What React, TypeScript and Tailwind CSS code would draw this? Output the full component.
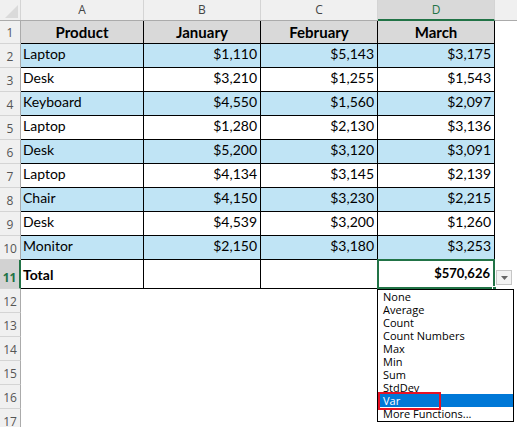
import React from "react";

const data: string[][] = [
  ["Laptop", "$1,110", "$5,143", "$3,175"],
  ["Desk", "$3,210", "$1,255", "$1,543"],
  ["Keyboard", "$4,550", "$1,560", "$2,097"],
  ["Laptop", "$1,280", "$2,130", "$3,136"],
  ["Desk", "$5,200", "$3,120", "$3,091"],
  ["Laptop", "$4,134", "$3,145", "$2,139"],
  ["Chair", "$4,150", "$3,230", "$2,215"],
  ["Desk", "$4,539", "$3,200", "$1,260"],
  ["Monitor", "$2,150", "$3,180", "$3,253"],
];

const menu = ["None", "Average", "Count", "Count Numbers", "Max", "Min", "Sum", "StdDev", "Var", "More Functions..."];

const cellFont = { fontFamily: "Lato, 'Liberation Sans', sans-serif" };
const uiFont = { fontFamily: "'Open Sans', 'Noto Sans', sans-serif" };

function RowHead({ n, h, selected }: { n: number; h: string; selected?: boolean }) {
  return (
    <div
      className={`w-[21px] shrink-0 flex items-end justify-center pb-[1px] text-[12px] leading-none border-b border-[#d4d4d4] ${
        selected ? "bg-[#d2d2d2] text-[#217346] border-r-2 border-r-[#217346]" : "bg-[#f0f0f0] text-[#555] border-r border-r-[#ababab]"
      } ${h}`}
      style={uiFont}
    >
      <span className="pb-[3px]">{n}</span>
    </div>
  );
}

export default function App() {
  return (
    <div className="relative w-[517px] h-[427px] overflow-hidden bg-white">
      {/* Column header row */}
      <div className="flex h-[21px] border-b border-[#ababab] bg-[#f0f0f0] text-[12px] text-[#444]" style={uiFont}>
        <div className="relative w-[21px] shrink-0 border-r border-[#d4d4d4]">
          <svg className="absolute right-[2px] bottom-[2px]" width="13" height="13" viewBox="0 0 13 13">
            <polygon points="13,0 13,13 0,13" fill="#dadada" />
          </svg>
        </div>
        <div className="w-[123px] shrink-0 flex items-center justify-center border-r border-[#d4d4d4]">A</div>
        <div className="w-[117px] shrink-0 flex items-center justify-center border-r border-[#d4d4d4]">B</div>
        <div className="w-[117px] shrink-0 flex items-center justify-center border-r border-[#d4d4d4]">C</div>
        <div className="w-[117px] shrink-0 flex items-center justify-center border-r border-[#d4d4d4] bg-[#d9d9d9] text-[#217346] border-b-2 border-b-[#217346] -mb-[1px]">D</div>
        <div className="flex-1" />
      </div>

      {/* Row 1 header */}
      <div className="flex h-[23px]" style={cellFont}>
        <RowHead n={1} h="h-[23px]" />
        <div className="w-[123px] shrink-0 flex items-center justify-center bg-[#d9d9d9] border-r border-b border-black font-bold text-[15px] text-black">Product</div>
        <div className="w-[117px] shrink-0 flex items-center justify-center bg-[#d9d9d9] border-r border-b border-black font-bold text-[15px] text-black">January</div>
        <div className="w-[117px] shrink-0 flex items-center justify-center bg-[#d9d9d9] border-r border-b border-black font-bold text-[15px] text-black">February</div>
        <div className="w-[117px] shrink-0 flex items-center justify-center bg-[#d9d9d9] border-r border-b border-black font-bold text-[15px] text-black">March</div>
      </div>

      {data.map((r, i) => {
        const blue = i % 2 === 0;
        const bg = blue ? "bg-[#c0e4f5]" : "bg-white";
        return (
          <div key={i} className="flex h-[24px] text-[14px] text-black" style={cellFont}>
            <RowHead n={i + 2} h="h-[24px]" />
            <div className={`w-[123px] shrink-0 flex items-end pb-[3px] pl-[2px] border-r border-b border-black ${bg}`}>{r[0]}</div>
            <div className={`w-[117px] shrink-0 flex items-end justify-end pb-[3px] pr-[3px] border-r border-b border-black ${bg}`}>{r[1]}</div>
            <div className={`w-[117px] shrink-0 flex items-end justify-end pb-[3px] pr-[3px] border-r border-b border-black ${bg}`}>{r[2]}</div>
            <div className={`w-[117px] shrink-0 flex items-end justify-end pb-[3px] pr-[3px] border-r border-b border-black ${bg}`}>{r[3]}</div>
          </div>
        );
      })}

      {/* Row 11 total */}
      <div className="flex h-[29px] text-[14px] text-black font-bold" style={cellFont}>
        <RowHead n={11} h="h-[29px]" selected />
        <div className="w-[123px] shrink-0 flex items-center pl-[2px] border-r border-b border-black bg-white">Total</div>
        <div className="w-[117px] shrink-0 border-r border-b border-black bg-white" />
        <div className="w-[117px] shrink-0 border-r border-b border-black bg-white" />
        <div className="relative w-[117px] shrink-0 flex items-center justify-end pr-[4px] border-r border-b border-black bg-white text-[13px]">
          <div className="absolute -left-[1px] -top-[1px] right-[-1px] bottom-[-1px] border-2 border-[#217346]" />
          <span className="relative">$570,626</span>
          <div className="absolute right-[-3px] bottom-[-3px] w-[5px] h-[5px] bg-[#217346] border border-white" />
        </div>
      </div>

      {[12, 13, 14, 15, 16, 17].map((n) => (
        <div key={n} className="flex h-[24px]">
          <RowHead n={n} h="h-[24px]" />
          <div className="flex-1" />
        </div>
      ))}

      {/* dropdown button */}
      <div className="absolute left-[496px] top-[270px] w-[16px] h-[15px] bg-[#f3f3f3] border border-[#c6c6c6] flex items-center justify-center">
        <svg width="7" height="4" viewBox="0 0 7 4">
          <polygon points="0,0 7,0 3.5,4" fill="#666" />
        </svg>
      </div>

      {/* dropdown list */}
      <div className="absolute left-[377px] top-[289px] w-[137px] h-[133px] bg-white border border-black text-[11px] text-black leading-[13px]" style={uiFont}>
        {menu.map((m) => (
          <div key={m} className={`h-[13px] pl-[5px] ${m === "Var" ? "bg-[#0078d7] text-white" : ""}`}>
            {m}
          </div>
        ))}
        <div className="absolute left-0 top-[102px] w-[63px] h-[18px] border-2 border-[#e81123]" />
      </div>
    </div>
  );
}
